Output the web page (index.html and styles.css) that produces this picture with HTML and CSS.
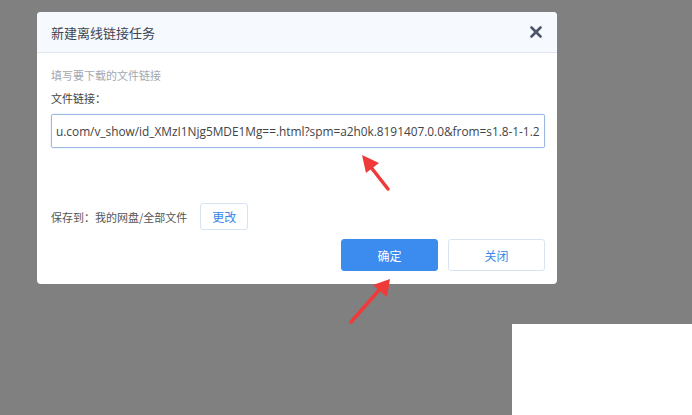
FILE: index.html
```html
<!DOCTYPE html>
<html lang="zh-CN">
<head>
    <meta charset="UTF-8">
    <link rel="stylesheet" href="styles.css">
</head>
<body>
    <div class="dialog">
        <div class="dialog-header">
            <span class="dialog-title">新建离线链接任务</span>
            <svg class="close" width="12" height="12" viewBox="0 0 12 12">
                <path d="M1.5 1.5 L10.5 10.5 M10.5 1.5 L1.5 10.5" stroke="#4d5666" stroke-width="2.6" stroke-linecap="round"/>
            </svg>
        </div>
        <div class="dialog-body">
            <div class="hint">填写要下载的文件链接</div>
            <div class="label">文件链接：</div>
            <div class="link-input">u.com/v_show/id_XMzI1Njg5MDE1Mg==.html?spm=a2h0k.8191407.0.0&amp;from=s1.8-1-1.2</div>
            <div class="save-row">
                <span>保存到：我的网盘/全部文件</span>
                <button class="btn-small">更改</button>
            </div>
            <div class="actions">
                <button class="btn btn-primary">确定</button>
                <button class="btn btn-default">关闭</button>
            </div>
        </div>
    </div>

    <div class="white-box"></div>

    <svg class="arrows" width="692" height="415" viewBox="0 0 692 415">
        <line x1="388" y1="189" x2="370" y2="166" stroke="#f03a3a" stroke-width="3.5" stroke-linecap="round"/>
        <polygon points="362,155 379,163 366,173" fill="#f03a3a"/>
        <line x1="351" y1="322" x2="381" y2="288" stroke="#f03a3a" stroke-width="3.5" stroke-linecap="round"/>
        <polygon points="390,279 387,297 373,285" fill="#f03a3a"/>
    </svg>
</body>
</html>
```

FILE: styles.css
```css
body {
    margin: 0;
    width: 692px;
    height: 415px;
    background: #808080;
    font-family: "Noto Sans CJK SC", "Liberation Sans", sans-serif;
    overflow: hidden;
    position: relative;
}
.dialog {
    margin: 12px 0 0 37px;
    width: 520px;
    height: 272px;
    background: #fff;
    border-radius: 4px;
    overflow: hidden;
}
.dialog-header {
    height: 40px;
    background: #f6f9fd;
    border-bottom: 1px solid #dfe5ee;
    display: flex;
    align-items: center;
    justify-content: space-between;
    padding: 0 14px;
}
.dialog-title {
    font-size: 13px;
    color: #3d4452;
}
.close {
    margin-right: 1px;
}
.dialog-body {
    padding: 14px 12px 0 14px;
}
.hint {
    font-size: 11px;
    color: #a3a8b0;
    line-height: 16px;
}
.label {
    margin-top: 7px;
    font-size: 11px;
    color: #444;
    line-height: 16px;
}
.link-input {
    margin-top: 8px;
    height: 32px;
    border: 1px solid #9bb9e2;
    border-radius: 2px;
    padding: 0 4px;
    font-family: "Open Sans", "Liberation Sans", sans-serif;
    font-size: 11.9px;
    letter-spacing: -0.03px;
    line-height: 32px;
    color: #444;
    white-space: nowrap;
    overflow: hidden;
    box-shadow: 0 0 2px rgba(110, 160, 230, 0.35);
}
.save-row {
    margin-top: 55px;
    display: flex;
    align-items: center;
    font-size: 11px;
    color: #555;
}
.btn-small {
    margin-left: 13px;
    width: 48px;
    height: 27px;
    background: #fff;
    border: 1px solid #d6e3f3;
    border-radius: 3px;
    color: #3a86e6;
    font-family: inherit;
    font-size: 12px;
    padding: 0;
}
.actions {
    margin-top: 9px;
    display: flex;
    justify-content: flex-end;
    gap: 10px;
}
.btn {
    width: 97px;
    height: 32px;
    border-radius: 3px;
    font-family: inherit;
    font-size: 12px;
    padding: 0;
}
.btn-primary {
    background: #3c8bef;
    border: 1px solid #3c8bef;
    color: #fff;
}
.btn-default {
    background: #fff;
    border: 1px solid #d9e4f2;
    color: #3a86e6;
}
.white-box {
    margin: 40px 0 0 512px;
    width: 180px;
    height: 91px;
    background: #fff;
}
.arrows {
    position: absolute;
    left: 0;
    top: 0;
}
```
